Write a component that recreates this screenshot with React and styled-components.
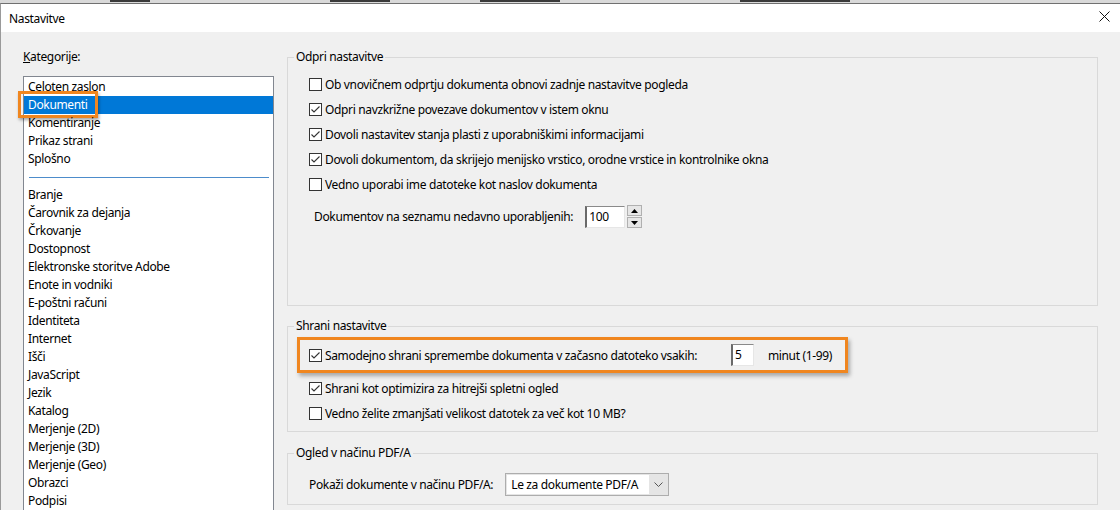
import React from "react";
import styled, { createGlobalStyle } from "styled-components";

const GlobalStyle = createGlobalStyle`
html, body {
  margin: 0;
  padding: 0;
  height: 100%;
  overflow: hidden;
  background: #f0f0f0;
}
body {
  font-family: "Noto Sans", "Segoe UI", sans-serif;
  font-size: 12px;
  letter-spacing: -0.35px;
  color: #000;
}
`;

const mainCategories = ["Celoten zaslon", "Dokumenti", "Komentiranje", "Prikaz strani", "Splošno"];
const otherCategories = [
    "Branje", "Čarovnik za dejanja", "Črkovanje", "Dostopnost", "Elektronske storitve Adobe",
    "Enote in vodniki", "E-poštni računi", "Identiteta", "Internet", "Išči", "JavaScript",
    "Jezik", "Katalog", "Merjenje (2D)", "Merjenje (3D)", "Merjenje (Geo)", "Obrazci", "Podpisi"
];

const openOptions = [
    { label: "Ob vnovičnem odprtju dokumenta obnovi zadnje nastavitve pogleda", checked: false },
    { label: "Odpri navzkrižne povezave dokumentov v istem oknu", checked: true },
    { label: "Dovoli nastavitev stanja plasti z uporabniškimi informacijami", checked: true },
    { label: "Dovoli dokumentom, da skrijejo menijsko vrstico, orodne vrstice in kontrolnike okna", checked: true },
    { label: "Vedno uporabi ime datoteke kot naslov dokumenta", checked: false },
];

function CheckBox({ checked }) {
    return (
        <Box>
            {checked && (
                <svg width="11" height="11" viewBox="0 0 11 11">
                    <polyline points="1.5,5.5 4,8 9.5,2.5" fill="none" stroke="#333" strokeWidth="1.1" />
                </svg>
            )}
        </Box>
    );
}

function Option({ label, checked }) {
    return (
        <Row>
            <CheckBox checked={checked} />
            <span>{label}</span>
        </Row>
    );
}

function App() {
    return (
        <>
            <GlobalStyle />
            <BackdropStrip>
                <Smudge $w={40} $x={110} />
                <Smudge $w={60} $x={330} />
                <Smudge $w={80} $x={480} />
                <Smudge $w={110} $x={740} />
            </BackdropStrip>
            <Window>
                <TitleBar>
                    <span>Nastavitve</span>
                    <CloseButton>
                        <svg width="11" height="11" viewBox="0 0 11 11">
                            <path d="M0.5 0.5 L10.5 10.5 M10.5 0.5 L0.5 10.5" stroke="#111" strokeWidth="1" />
                        </svg>
                    </CloseButton>
                </TitleBar>

                <Body>
                    <LeftPane>
                        <PaneLabel><u>K</u>ategorije:</PaneLabel>
                        <List>
                            {mainCategories.map((name) => (
                                <Item key={name} $selected={name === "Dokumenti"}>
                                    {name}
                                    {name === "Dokumenti" && <Callout />}
                                </Item>
                            ))}
                            <Separator />
                            {otherCategories.map((name) => (
                                <Item key={name}>{name}</Item>
                            ))}
                        </List>
                    </LeftPane>

                    <RightPane>
                        <Group $pt={6} $pb={77}>
                            <Legend>Odpri nastavitve</Legend>
                            {openOptions.map((o) => (
                                <Option key={o.label} label={o.label} checked={o.checked} />
                            ))}
                            <FieldRow $indent={26} $mt={8}>
                                <span>Dokumentov na seznamu nedavno uporabljenih:</span>
                                <TextBox $w={40} $ml={12}>100</TextBox>
                                <Spinner>
                                    <SpinButton>
                                        <svg width="7" height="4" viewBox="0 0 7 4"><path d="M3.5 0 L7 4 L0 4 Z" fill="#000" /></svg>
                                    </SpinButton>
                                    <SpinButton>
                                        <svg width="7" height="4" viewBox="0 0 7 4"><path d="M0 0 L7 0 L3.5 4 Z" fill="#000" /></svg>
                                    </SpinButton>
                                </Spinner>
                            </FieldRow>
                        </Group>

                        <Group $pt={2} $pb={5} $mt={11}>
                            <Legend>Shrani nastavitve</Legend>
                            <HighlightRow>
                                <CheckBox checked />
                                <Grow>Samodejno shrani spremembe dokumenta v začasno datoteko vsakih:</Grow>
                                <TextBox $w={23}>5</TextBox>
                                <Unit>minut (1-99)</Unit>
                            </HighlightRow>
                            <Option label="Shrani kot optimizira za hitrejši spletni ogled" checked />
                            <Option label="Vedno želite zmanjšati velikost datotek za več kot 10 MB?" checked={false} />
                        </Group>

                        <Group $pt={11} $pb={8} $mt={12}>
                            <Legend>Ogled v načinu PDF/A</Legend>
                            <FieldRow $indent={21}>
                                <span>Pokaži dokumente v načinu PDF/A:</span>
                                <Select>
                                    <SelectValue>Le za dokumente PDF/A</SelectValue>
                                    <SelectArrow>
                                        <svg width="9" height="5" viewBox="0 0 9 5">
                                            <polyline points="0.5,0.5 4.5,4.5 8.5,0.5" fill="none" stroke="#555" strokeWidth="1" />
                                        </svg>
                                    </SelectArrow>
                                </Select>
                            </FieldRow>
                        </Group>
                    </RightPane>
                </Body>
            </Window>
        </>
    );
}

const BackdropStrip = styled.div`
position: relative;
height: 3px;
background: #d9d9d9;
overflow: hidden;
`;

const Smudge = styled.div`
position: absolute;
top: 0;
left: ${(p) => p.$x}px;
width: ${(p) => p.$w}px;
height: 2px;
background: #3a3a3a;
`;

const Window = styled.div`
border-top: 1px solid #707070;
border-left: 1px solid #9a9a9a;
height: 506px;
display: flex;
flex-direction: column;
background: #f0f0f0;
`;

const TitleBar = styled.div`
height: 28px;
flex-shrink: 0;
display: flex;
align-items: center;
justify-content: space-between;
padding: 0 10px 0 8px;
background: #fff;
`;

const CloseButton = styled.div`
display: flex;
width: 11px;
height: 11px;
margin-top: -4px;
`;

const Body = styled.div`
flex: 1;
display: flex;
overflow: hidden;
`;

const LeftPane = styled.div`
width: 264px;
flex-shrink: 0;
padding: 16px 0 0 22px;
`;

const PaneLabel = styled.div`
line-height: 18px;
margin-bottom: 10px;
`;

const List = styled.div`
width: 249px;
background: #fff;
border: 1px solid #828790;
border-bottom: none;
padding-top: 1px;
height: 600px;
`;

const Item = styled.div`
position: relative;
height: 18px;
line-height: 18px;
padding-left: 4px;
white-space: nowrap;
background: ${(p) => (p.$selected ? "#0078d7" : "transparent")};
color: ${(p) => (p.$selected ? "#fff" : "#000")};
`;

const Callout = styled.div`
position: absolute;
left: -6px;
top: -5px;
width: 80px;
height: 27px;
box-sizing: border-box;
border: 3px solid #f0861f;
box-shadow: 1px 2px 3px rgba(0, 0, 0, 0.35);
`;

const Separator = styled.div`
height: 18px;
display: flex;
align-items: center;
padding: 0 4px 0 5px;

&::after {
    content: "";
    flex: 1;
    height: 1px;
    margin-top: 1px;
    background: #4d8ccb;
}
`;

const RightPane = styled.div`
width: 811px;
padding-top: 16px;
`;

const Group = styled.fieldset`
margin: ${(p) => p.$mt || 0}px 0 0 0;
padding: ${(p) => p.$pt}px 0 ${(p) => p.$pb}px 0;
border: 1px solid #d9d9d9;
min-width: 0;
`;

const Legend = styled.legend`
margin-left: 6px;
padding: 0 2px;
line-height: 18px;
`;

const Row = styled.div`
height: 25px;
display: flex;
align-items: center;
padding-left: 21px;
white-space: nowrap;
`;

const Box = styled.div`
width: 11px;
height: 11px;
border: 1px solid #333;
background: #fff;
margin-right: 3px;
flex-shrink: 0;
display: flex;
`;

const FieldRow = styled.div`
display: flex;
align-items: center;
height: 23px;
margin-top: ${(p) => p.$mt || 0}px;
padding-left: ${(p) => p.$indent}px;
white-space: nowrap;
`;

const TextBox = styled.div`
width: ${(p) => p.$w}px;
height: 22px;
box-sizing: border-box;
margin-left: ${(p) => p.$ml || 0}px;
padding: 1px 0 0 2px;
line-height: 18px;
background: #fff;
border-style: solid;
border-width: 1px 1px 1px 2px;
border-color: #8a8a8a #e6e6e6 #e6e6e6 #6a6a6a;
`;

const Spinner = styled.div`
display: flex;
flex-direction: column;
gap: 1px;
margin-left: 2px;
`;

const SpinButton = styled.div`
width: 13px;
height: 9px;
border: 1px solid #b0b0b0;
background: #e6e6e6;
display: flex;
align-items: center;
justify-content: center;
`;

const HighlightRow = styled.div`
width: 551px;
height: 36px;
box-sizing: border-box;
margin: 0 0 3px 9px;
padding: 0 13px 0 9px;
display: flex;
align-items: center;
white-space: nowrap;
border: 3px solid #f0861f;
box-shadow: 2px 3px 4px rgba(0, 0, 0, 0.3);
`;

const Grow = styled.span`
flex: 1;
`;

const Unit = styled.span`
margin-left: 14px;
`;

const Select = styled.div`
width: 164px;
height: 23px;
box-sizing: border-box;
margin-left: 12px;
border: 1px solid #adadad;
background: #e5e5e5;
display: flex;
`;

const SelectValue = styled.div`
flex: 1;
background: #fff;
padding-left: 4px;
margin: 1px 0 1px 1px;
line-height: 19px;
`;

const SelectArrow = styled.div`
width: 19px;
display: flex;
align-items: center;
justify-content: center;
`;

export default App
